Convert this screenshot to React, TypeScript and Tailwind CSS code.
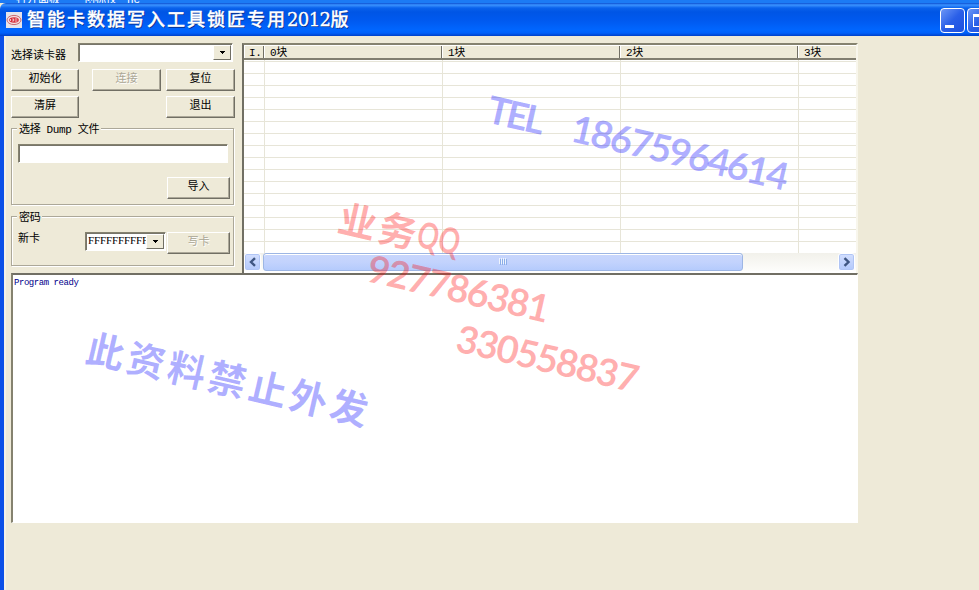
import { ReactNode } from "react";

const UI = "font-['Liberation_Mono','Noto_Sans_CJK_SC',sans-serif]";
const SUNKEN =
  "border border-t-[#85826f] border-l-[#85826f] border-r-white border-b-white bg-white shadow-[inset_1px_1px_0_#77756a]";

function Button({ className = "", disabled = false, children }: { className?: string; disabled?: boolean; children: ReactNode }) {
  return (
    <button
      className={`flex h-[22px] shrink-0 justify-center border border-t-white border-l-white border-r-[#716f64] border-b-[#716f64] bg-[#eeead8] pt-px leading-[17px] shadow-[inset_-1px_-1px_0_#aca899] ${disabled ? "text-[#aaa695] [text-shadow:1px_1px_0_white]" : "text-black"} ${className}`}
    >
      {children}
    </button>
  );
}

function Combo({ className = "", value = "" }: { className?: string; value?: string }) {
  return (
    <div className={`flex h-[19px] shrink-0 ${SUNKEN} ${className}`}>
      <span className="flex-1 overflow-hidden pl-[2px] font-['Liberation_Serif',serif] text-[11px] leading-[15px] tracking-[-0.12px] whitespace-nowrap">
        {value}
      </span>
      <span className="mt-px mr-px mb-px flex w-[18px] shrink-0 items-center justify-center border border-t-white border-l-white border-r-[#716f64] border-b-[#716f64] bg-[#eeead8]">
        <svg width="5" height="3" viewBox="0 0 5 3" shapeRendering="crispEdges">
          <path d="M0 0h5v1h-5zM1 1h3v1h-3zM2 2h1v1h-1z" fill="#000" />
        </svg>
      </span>
    </div>
  );
}

function Group({ title, className = "", children }: { title: string; className?: string; children: ReactNode }) {
  return (
    <section
      className={`w-[223px] shrink-0 border border-[#aca899] shadow-[1px_1px_0_white,inset_1px_1px_0_white] ${className}`}
    >
      <h2 className="-mt-[6px] ml-[5px] flex h-[14px] w-fit items-center bg-[#eeead8] px-[2px] leading-[14px] tracking-[-0.35px] whitespace-pre">{title}</h2>
      {children}
    </section>
  );
}

function Chevron({ right = false }: { right?: boolean }) {
  return (
    <span className="flex h-[18px] w-[17px] shrink-0 items-center justify-center rounded-[3px] border border-white bg-linear-to-b from-[#d3dffe] to-[#b3c9fb] shadow-[inset_0_0_0_1px_#b0c5f5]">
      <svg width="8" height="10" viewBox="0 0 8 10" fill="none" stroke="#3f5682" strokeWidth="2.4">
        <path d={right ? "M1.5 1.2L5.5 5L1.5 8.8" : "M6 1.2L2 5L6 8.8"} />
      </svg>
    </span>
  );
}

function BlockTable() {
  const columns = [
    { name: "I.", width: "w-[20px] pl-[4px]" },
    { name: "0块", width: "w-[178px] pl-[5px]" },
    { name: "1块", width: "w-[178px] pl-[5px]" },
    { name: "2块", width: "w-[178px] pl-[5px]" },
    { name: "3块", width: "w-[59px] pl-[5px]" },
  ];
  return (
    <div className="flex h-[230px] w-[616px] shrink-0 flex-col border-t-2 border-r-2 border-l-2 border-t-[#85826f] border-r-[#f8f6ec] border-l-[#716f64] bg-white">
      <div className="flex h-[15px] shrink-0 overflow-hidden border-b-2 border-[#817e70] bg-[#eeead8]">
        {columns.map((c, i) => (
          <div
            key={c.name}
            className={`h-[13px] shrink-0 overflow-hidden border-t border-l border-white text-[11px] leading-[14px] tracking-[-0.4px] ${i < 4 ? "shadow-[inset_-1px_0_0_#716f64]" : ""} ${c.width}`}
          >
            {c.name}
          </div>
        ))}
      </div>
      <div className="flex h-[193px] shrink-0 flex-col overflow-hidden">
        {Array.from({ length: 17 }, (_, row) => (
          <div key={row} className={`flex shrink-0 ${row === 0 ? "h-[2px]" : "h-3"} border-b border-[#e7e5d8]`}>
            <i className="w-[21px] border-r border-[#e7e5d8]" />
            <i className="w-[178px] border-r border-[#e7e5d8]" />
            <i className="w-[178px] border-r border-[#e7e5d8]" />
            <i className="w-[178px] border-r border-[#e7e5d8]" />
          </div>
        ))}
      </div>
      <div className="flex h-[18px] shrink-0 items-center bg-linear-to-b from-[#f2f1eb] to-[#fdfdfb]">
        <Chevron />
        <div className="ml-[2px] flex h-[18px] w-[480px] items-center justify-center gap-px rounded-[3px] border border-[#9db6e4] bg-linear-to-b from-[#c8d6fc] via-[#c3d3fd] to-[#b5cbfc] shadow-[inset_0_1px_0_white]">
          {[0, 1, 2, 3].map((n) => (
            <i key={n} className="h-[6px] w-px bg-[#8caee8] shadow-[-1px_-1px_0_#eef4fe]" />
          ))}
        </div>
        <div className="mr-px ml-auto">
          <Chevron right />
        </div>
      </div>
    </div>
  );
}

function Watermark() {
  const marks = [
    { text: "TEL", x: 485, y: 122, length: 58, color: "#0000ff", size: 38 },
    { text: "18675964614", x: 569, y: 141, length: 222, color: "#0000ff", size: 38 },
    { text: "业务", x: 336, y: 231, length: 79, color: "#ff0000", size: 38 },
    { text: "QQ", x: 415, y: 246, length: 43, color: "#ff0000", size: 36 },
    { text: "927786381", x: 365, y: 281, length: 186, color: "#ff0000", size: 38 },
    { text: "330558837", x: 454, y: 351, length: 186, color: "#ff0000", size: 38 },
    { text: "此资料禁止外发", x: 84, y: 361, length: 288, color: "#0000ff", size: 38 },
  ];
  return (
    <svg className="pointer-events-none absolute inset-0" width="979" height="590">
      {marks.map((m) => (
        <text
          key={m.text}
          transform={`translate(${m.x} ${m.y}) rotate(13)`}
          textLength={m.length}
          lengthAdjust={m.text === "QQ" ? "spacingAndGlyphs" : "spacing"}
          fontSize={m.size}
          fill={m.color}
          fillOpacity="0.31"
          className="font-['Lato','Noto_Sans_CJK_SC',sans-serif] font-bold"
        >
          {m.text}
        </text>
      ))}
    </svg>
  );
}

export default function App() {
  return (
    <div className={`relative flex h-[590px] w-[979px] flex-col overflow-hidden bg-[#eeead8] text-[11px] text-black ${UI}`}>
      <div className="flex h-[3px] shrink-0 items-end overflow-hidden bg-[#1c7bf5] pl-4 text-[11px] leading-[5px] text-white">
        <span>打开面板</span>
        <span className="ml-[24px]">创标仪</span>
        <span className="ml-[10px]">ne</span>
      </div>
      <header className="flex h-[33px] shrink-0 items-center rounded-tl-[6px] bg-[linear-gradient(#0b4fd0_0,#3c93ff_2px,#0a62ec_5px,#0055e5_9px,#005af0_18px,#0066ff_27px,#0060fa_30px,#0040c8_33px)] pl-[6px]">
        <svg width="16" height="16" viewBox="0 0 16 16">
          <rect width="16" height="16" fill="#e6e4ea" />
          <ellipse cx="8" cy="8" rx="7" ry="4.6" fill="#f5dede" stroke="#c96a72" />
          <ellipse cx="8" cy="8" rx="4.8" ry="2.7" fill="#d62f3c" />
          <path d="M4.5 7v2M6.2 7h1.5v2H6.2M9 7h2.3M9 9h2.3" stroke="#fff" strokeWidth="0.7" fill="none" />
        </svg>
        <h1 className="ml-[5px] font-['DejaVu_Serif','Noto_Sans_CJK_SC',sans-serif] text-[18px] leading-[30px] font-medium whitespace-nowrap text-white [-webkit-text-stroke:0.3px_white] [text-shadow:1px_1px_0_#0a2f8c]">
          <span className="tracking-[2px]">智能卡数据写入工具锁匠专用</span>
          <span className="tracking-[-0.6px]">2012</span>版
        </h1>
        <div className="mr-[-13px] ml-auto flex gap-[2px] pt-[2px]">
          <span className="flex h-[25px] w-[25px] rounded-[4px] border border-white bg-linear-to-br from-[#6d95f5] via-[#2a5fe8] to-[#1c50df] pt-[16px] pl-[4px]">
            <i className="h-[3px] w-[9px] bg-white" />
          </span>
          <span className="flex h-[25px] w-[25px] rounded-[4px] border border-white bg-linear-to-br from-[#6d95f5] via-[#2a5fe8] to-[#1c50df] pt-[5px] pl-[5px]">
            <i className="h-[13px] w-[13px] border border-t-[3px] border-white" />
          </span>
        </div>
      </header>
      <main className="flex min-h-0 flex-1 flex-col border-l-4 border-[#0c50e8] pt-[7px] pl-[7px] shadow-[inset_2px_0_0_#f3f1e8]">
        <div className="flex h-[230px] shrink-0">
          <div className="flex w-[231px] shrink-0 flex-col">
            <div className="flex">
              <label className="w-[67px] pt-[6px] leading-[13px] whitespace-nowrap">
                <span className="relative top-px">选择读卡器</span>
              </label>
              <Combo className="w-[155px]" />
            </div>
            <div className="mt-[7px] flex">
              <Button className="w-[68px]">初始化</Button>
              <Button className="ml-[13px] w-[69px]" disabled>连接</Button>
              <Button className="ml-[5px] w-[69px]">复位</Button>
            </div>
            <div className="mt-[5px] flex justify-between pr-[7px]">
              <Button className="w-[68px]">清屏</Button>
              <Button className="w-[69px]">退出</Button>
            </div>
            <Group title="选择 Dump 文件" className="mt-[10px] h-[77px]">
              <div className={`mt-[7px] ml-[6px] h-[19px] w-[210px] ${SUNKEN}`} />
              <Button className="mt-[14px] ml-[155px] w-[63px]">导入</Button>
            </Group>
            <Group title="密码" className="mt-[11px] h-[50px]">
              <div className="mt-[7px] flex pl-[6px]">
                <span className="w-[67px] leading-[14px]">新卡</span>
                <Combo className="w-[81px]" value="FFFFFFFFFF" />
                <Button className="ml-px w-[63px]" disabled>写卡</Button>
              </div>
            </Group>
          </div>
          <BlockTable />
        </div>
        <div className="h-[250px] w-[847px] shrink-0 border-t-2 border-r border-b border-l-2 border-t-[#716f64] border-r-white border-b-white border-l-[#85826f] bg-white pt-[2px] pl-px text-[9px] leading-[13px] tracking-[-0.45px] text-[#00008b]">
          Program ready
        </div>
      </main>
      <Watermark />
    </div>
  );
}
